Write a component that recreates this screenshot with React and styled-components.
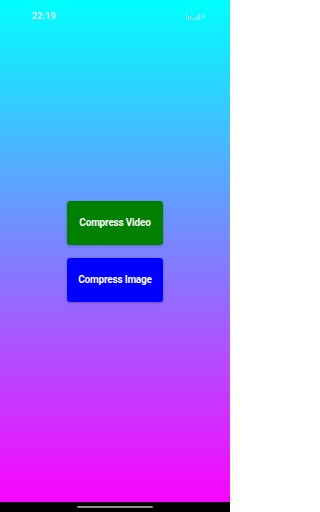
import React from "react";
import styled, { createGlobalStyle } from "styled-components";

const Global = createGlobalStyle`
  html, body { margin: 0; padding: 0; height: 100%; }
  body { font-family: Roboto, "Liberation Sans", sans-serif; }
  #root { height: 100%; }
`;

const Screen = styled.div`
  width: 230px;
  height: 512px;
  display: flex;
  flex-direction: column;
  background: linear-gradient(180deg, #00ffff 0%, #ff00ff 100%);
  overflow: hidden;
`;

const StatusBar = styled.div`
  height: 30px;
  display: flex;
  align-items: center;
  justify-content: space-between;
  padding: 0 24px 0 32px;
  box-sizing: border-box;
  flex-shrink: 0;
`;

const Time = styled.span`
  color: #ffffff;
  font-size: 9px;
  font-weight: 500;
  letter-spacing: 0.2px;
  margin-top: 1px;
`;

const Icons = styled.div`
  display: flex;
  align-items: center;
  opacity: 0.55;
  margin-top: 2px;
`;

const Content = styled.div`
  flex: 1;
  display: flex;
  flex-direction: column;
  align-items: center;
  justify-content: center;
  gap: 13px;
  margin-top: -30px;
`;

const Button = styled.button`
  width: 96px;
  height: 44px;
  border: none;
  border-radius: 3px;
  background: ${(p) => p.$bg};
  color: #ffffff;
  font-family: Roboto, "Liberation Sans", sans-serif;
  font-weight: 700;
  font-size: 10px;
  letter-spacing: -0.2px;
  box-shadow: 0 1px 3px rgba(0, 0, 0, 0.25);
  padding: 0;
  cursor: pointer;
`;

const NavBar = styled.div`
  height: 10px;
  background: #000;
  display: flex;
  justify-content: center;
  align-items: center;
  flex-shrink: 0;
`;

const Handle = styled.div`
  width: 76px;
  height: 2px;
  border-radius: 1px;
  background: #8a8a8a;
`;

function StatusIcons() {
  return (
    <svg width="20" height="7" viewBox="0 0 20 7" fill="#fff">
      <rect x="0" y="1" width="1" height="6" />
      <rect x="2" y="3" width="1" height="4" />
      <rect x="4" y="3" width="1" height="4" />
      <rect x="7" y="5" width="1.2" height="2" />
      <rect x="9" y="4" width="1.2" height="3" />
      <rect x="11" y="2.5" width="1.2" height="4.5" />
      <rect x="13" y="1" width="1.2" height="6" />
      <path d="M17.5 0 L16 3.8 L17.3 3.8 L16.8 7 L18.8 2.8 L17.5 2.8 Z" />
    </svg>
  );
}

export default function App() {
  return (
    <Screen>
      <Global />
      <StatusBar>
        <Time>22:19</Time>
        <Icons>
          <StatusIcons />
        </Icons>
      </StatusBar>
      <Content>
        <Button $bg="#008000">Compress Video</Button>
        <Button $bg="#0000ff">Compress Image</Button>
      </Content>
      <NavBar>
        <Handle />
      </NavBar>
    </Screen>
  );
}
